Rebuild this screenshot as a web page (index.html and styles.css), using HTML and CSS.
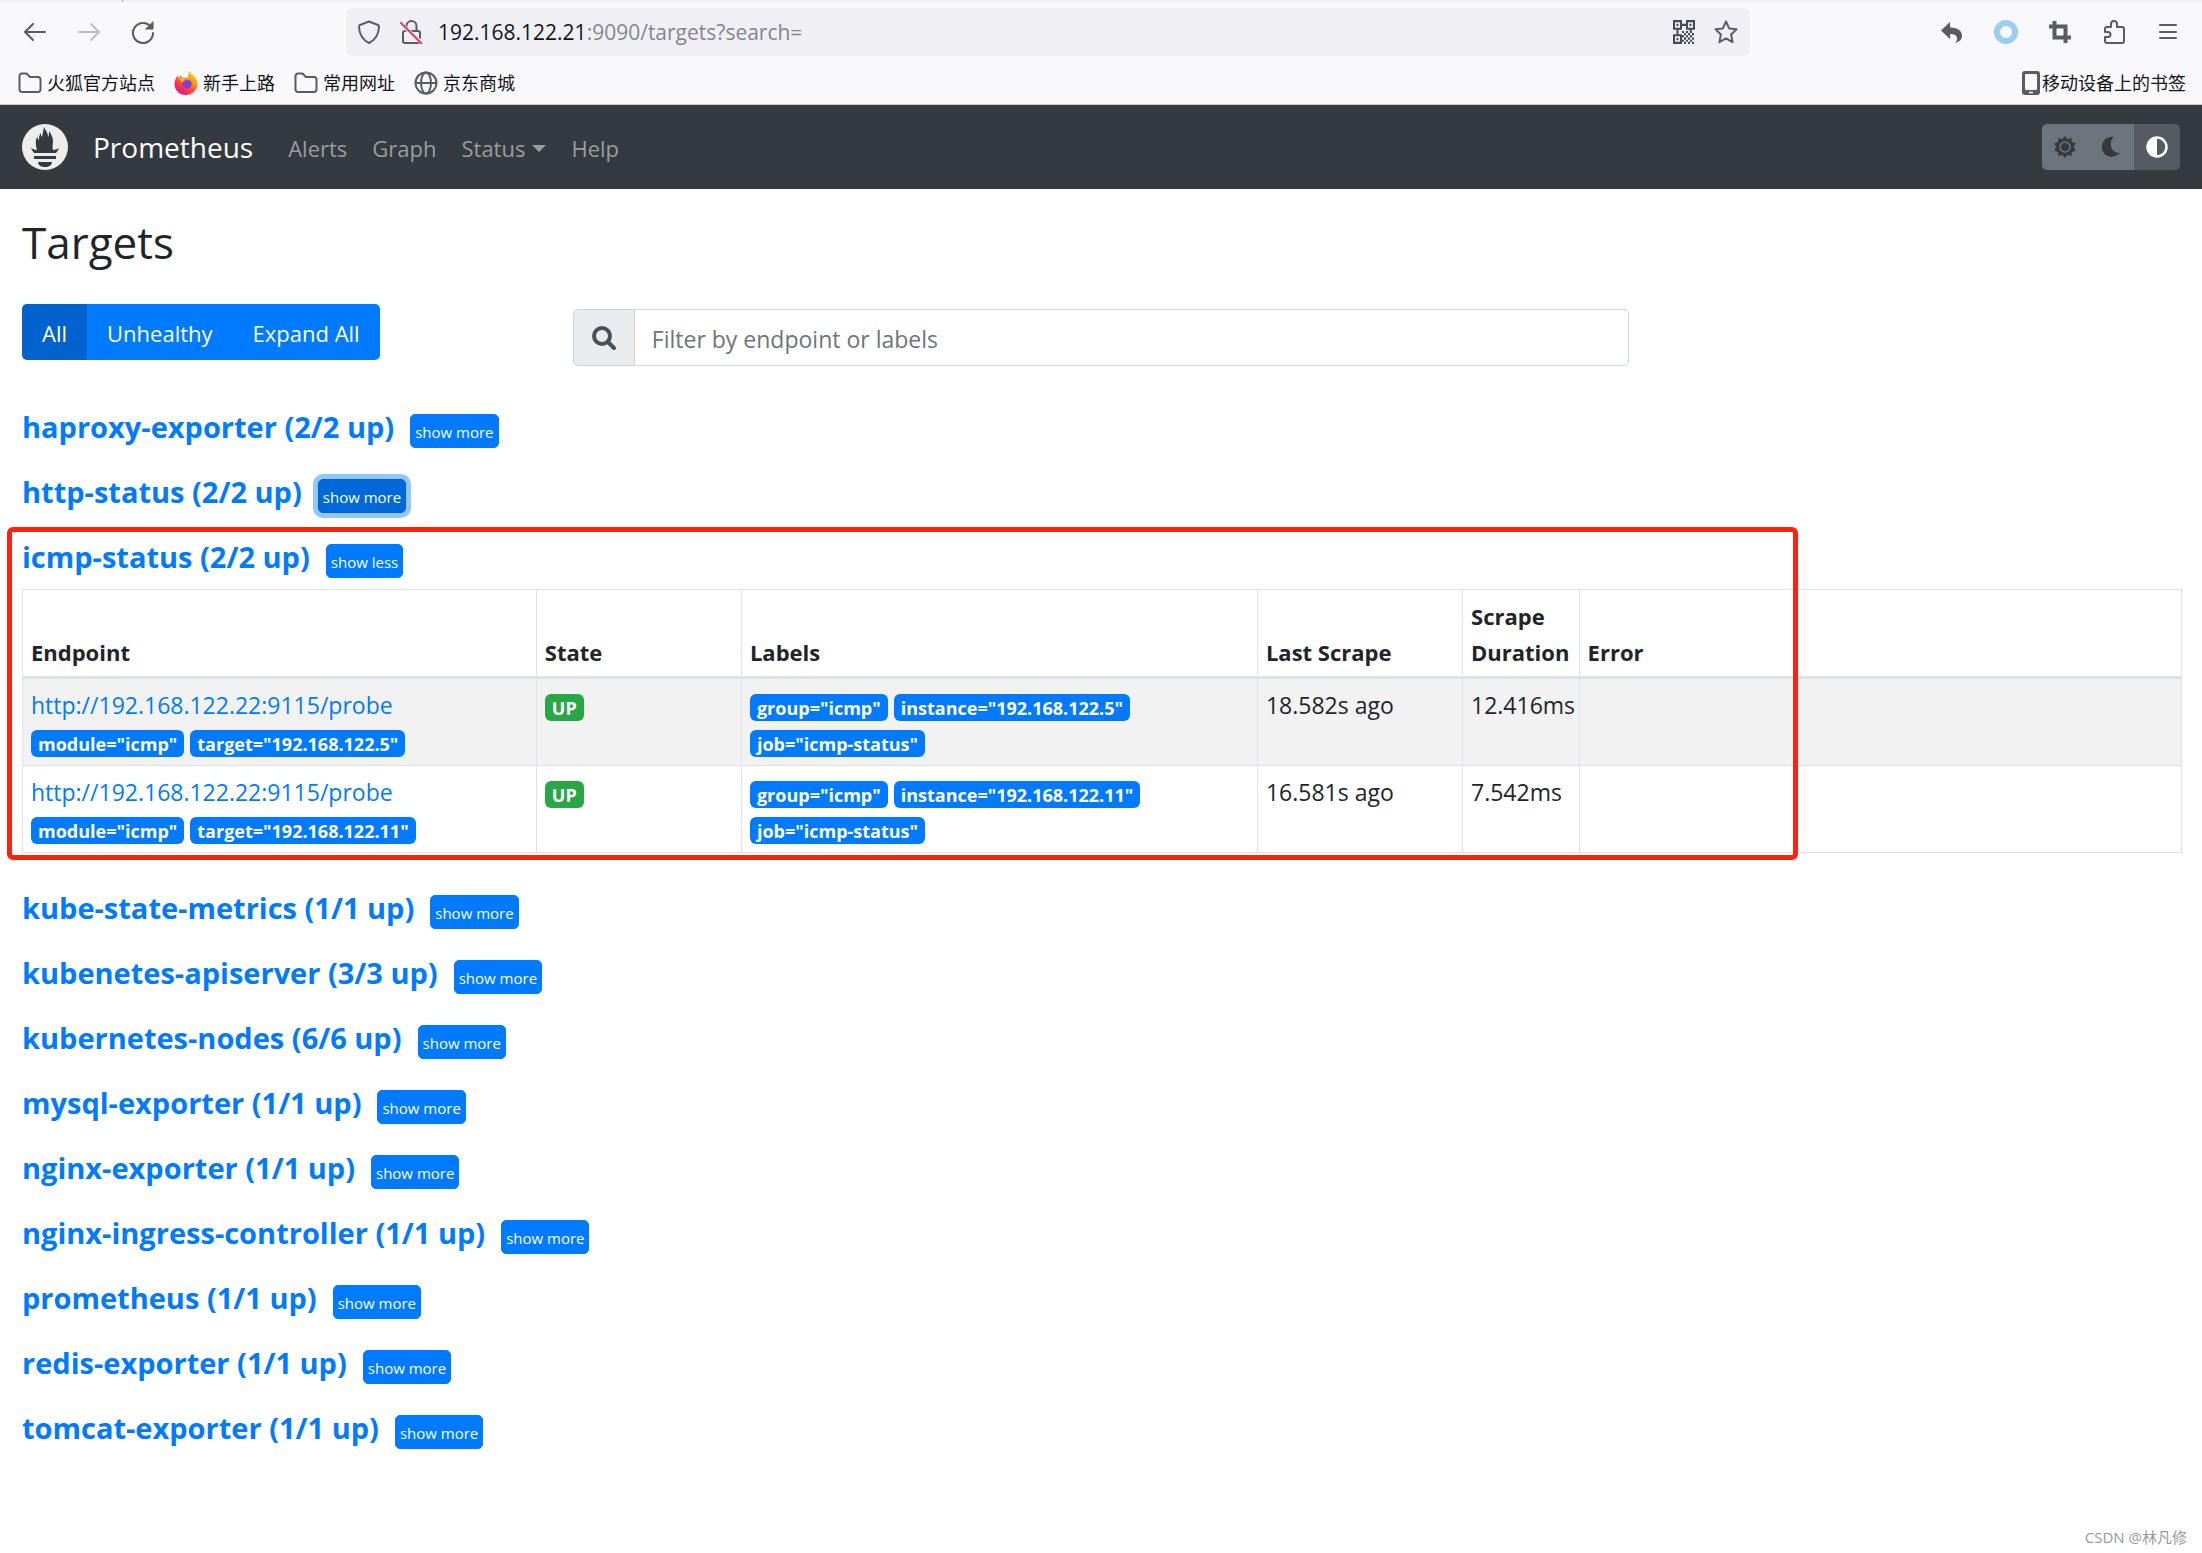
FILE: index.html
```html
<!DOCTYPE html>
<html lang="en">
<head>
<meta charset="utf-8">
<title>Prometheus Time Series Collection and Processing Server</title>
<link rel="stylesheet" href="styles.css">
</head>
<body>
<header class="browser">
  <div class="tab-edge"><span class="tab-divider"></span></div>
  <div class="toolbar">
    <div class="nav-buttons">
      <button class="icon-btn" type="button" aria-label="Back"><svg width="24" height="24" viewBox="0 0 24 24" fill="none" stroke="#5b5b66" stroke-width="2" stroke-linecap="round" stroke-linejoin="round"><path d="M22 12H2M10 4l-8 8 8 8"/></svg></button>
      <button class="icon-btn" type="button" aria-label="Forward"><svg width="24" height="24" viewBox="0 0 24 24" fill="none" stroke="#bcbcc2" stroke-width="2" stroke-linecap="round" stroke-linejoin="round"><path d="M2 12h20M14 4l8 8-8 8"/></svg></button>
      <button class="icon-btn" type="button" aria-label="Reload"><svg width="24" height="24" viewBox="0 0 24 24" fill="none" stroke="#5b5b66" stroke-width="2" stroke-linecap="round"><path d="M20 7A10 10 0 1 0 22 13"/><path d="M22 2v7h-7z" fill="#5b5b66" stroke-width="1" stroke-linejoin="round"/></svg></button>
    </div>
    <div class="urlbar">
      <svg width="24" height="24" viewBox="0 0 24 24" fill="none" stroke="#5b5b66" stroke-width="2" stroke-linejoin="round"><path d="M12 1.500l9 3.500c1 .400 1 1 1 2-.300 7-3 12.500-10 16C5 19.500 2.300 14 2 7c0-1 0-1.600 1-2z"/></svg>
      <svg class="lock" width="24" height="24" viewBox="0 0 24 24" fill="none" stroke="#5b5b66" stroke-width="2" stroke-linecap="round"><rect x="4" y="11" width="17" height="12" rx="2"/><path d="M7.500 7V6a5 5 0 0 1 10 0v5"/><path d="M1 3l22 20" stroke="#f0f0f4" stroke-width="4"/><path d="M2 3l20 20" stroke="#f0345e"/></svg>
      <div class="url" role="textbox" aria-label="Address"><span class="host">192.168.122.21</span>:9090/targets?search=</div>
      <button class="icon-btn" type="button" aria-label="QR code"><svg width="22" height="24" viewBox="0 0 22 22" preserveAspectRatio="none" fill="none" stroke="#4a4a52" stroke-width="2"><path d="M1 1h7v7H1zM14 1h7v7h-7zM1 14h7v7H1z"/><path d="M3.500 4.500h2M16.500 4.500h2M3.500 17.500h2M8 4.500h6M4.500 8v6M17.500 8v2"/><path d="M9 11h12M11 13h11M9 15h12M11 17h11M9 19h12M11 21h11" stroke-dasharray="2 2"/></svg></button>
      <button class="icon-btn" type="button" aria-label="Bookmark"><svg width="24" height="24" viewBox="0 0 24 24" fill="none" stroke="#5b5b66" stroke-width="2" stroke-linejoin="round"><path d="M12 1.500l3.200 6.900 7.300.900-5.400 5.100 1.500 7.800L12 18.400l-6.600 3.800 1.500-7.800L1.500 9.300l7.300-.900z"/></svg></button>
    </div>
    <div class="tool-buttons">
      <button class="icon-btn" type="button" aria-label="Undo"><svg width="24" height="24" viewBox="0 0 24 24" fill="#5b5b66"><path d="M10 2v5.500c8 0 12 3.500 12 8.500 0 3.500-3 6-7 7 3-2.500 4-9-5-9V19L1 10.500z"/></svg></button>
      <button class="icon-btn" type="button" aria-label="Extension"><svg width="24" height="24" viewBox="0 0 24 24" fill="none" stroke="#99cdf2" stroke-width="6"><circle cx="12" cy="12" r="9"/></svg></button>
      <button class="icon-btn" type="button" aria-label="Screenshot"><svg width="24" height="24" viewBox="0 0 24 24" fill="none" stroke="#5b5b66" stroke-width="4"><path d="M6.500 1v16.500H23M1 6.500h16.500V23"/></svg></button>
      <button class="icon-btn" type="button" aria-label="Extensions"><svg width="24" height="24" viewBox="0 0 24 24" fill="none" stroke="#5b5b66" stroke-width="2" stroke-linejoin="round"><path d="M9 7V4a3 3 0 0 1 6 0v3h5a2 2 0 0 1 2 2v12a2 2 0 0 1-2 2H5a2 2 0 0 1-2-2v-4h3a2.500 2.500 0 0 0 0-5H3V9a2 2 0 0 1 2-2z"/></svg></button>
      <button class="icon-btn" type="button" aria-label="Menu"><svg width="24" height="24" viewBox="0 0 24 24" stroke="#5b5b66" stroke-width="2" stroke-linecap="round"><path d="M4 5h16M4 12h16M4 18h16"/></svg></button>
    </div>
  </div>
  <nav class="bookmarks" aria-label="Bookmarks">
    <a class="bookmark" href="#"><svg width="24" height="24" viewBox="0 0 24 24" fill="none" stroke="#5b5b66" stroke-width="2" stroke-linejoin="round"><path d="M1.500 5A2.500 2.500 0 0 1 4 2.500h4.500L12 6h8a2.500 2.500 0 0 1 2.500 2.500v10A2.500 2.500 0 0 1 20 21H4a2.500 2.500 0 0 1-2.500-2.500z"/></svg>火狐官方站点</a>
    <a class="bookmark" href="#"><svg width="24" height="24" viewBox="0 0 24 24"><defs><linearGradient id="fox" x1="1" y1="0" x2="0.300" y2="1"><stop offset="0" stop-color="#fff44f"/><stop offset=".4" stop-color="#ff980e"/><stop offset=".75" stop-color="#ff3647"/><stop offset="1" stop-color="#e31587"/></linearGradient></defs><path d="M15.500 0c1 3 5 4.500 7 8.500C26 16 20 24 12 24 5 24 .5 19 .5 13 .5 9.500 2 6.500 3.500 4.500L5 7l1.500-2.500L9 7c2-.500 4-.500 5 0 0-2.500 0-5 1.500-7z" fill="url(#fox)"/><path d="M8 12c2-1 3-3 5-3 3 0 5 2 4.500 4.500S15 18 12.500 17.500 8 15 8 12z" fill="#7a42e0"/><path d="M5 7c2 0 4 0 6 1.500C9.500 9 9 11 7.500 11.500z" fill="#ffbd30"/></svg>新手上路</a>
    <a class="bookmark" href="#"><svg width="24" height="24" viewBox="0 0 24 24" fill="none" stroke="#5b5b66" stroke-width="2" stroke-linejoin="round"><path d="M1.500 5A2.500 2.500 0 0 1 4 2.500h4.500L12 6h8a2.500 2.500 0 0 1 2.500 2.500v10A2.500 2.500 0 0 1 20 21H4a2.500 2.500 0 0 1-2.500-2.500z"/></svg>常用网址</a>
    <a class="bookmark" href="#"><svg width="24" height="24" viewBox="0 0 24 24" fill="none" stroke="#5b5b66" stroke-width="2"><circle cx="12" cy="12" r="10.500"/><ellipse cx="12" cy="12" rx="5" ry="10.500"/><path d="M1.500 12h21"/></svg>京东商城</a>
    <a class="bookmark mobile" href="#"><svg width="18" height="24" viewBox="0 0 18 24"><rect width="18" height="24" rx="3" fill="#5b5b66"/><rect x="3" y="3" width="12" height="16" rx="1" fill="#f9f9fb"/><path d="M7 21.500h4" stroke="#f9f9fb" stroke-width="1.500"/></svg>移动设备上的书签</a>
  </nav>
</header>

<nav class="navbar">
  <a class="brand" href="#"><svg width="46" height="46" viewBox="0 0 46 46"><circle cx="23" cy="23" r="23" fill="#ededed"/><path d="M22 3c1 3 4 5 4 10 1-1 1-4 1-6 2 3 4 6 4 10 0 3-1 5 0 9 2 0 4-1 6-2-1 2-2 4-3 5H12c-1-1-2-3-3-5 2 1 4 2 6 2-1-4-2-9 0-13 1 2 2 3 2 4 0-4 0-6 2-8 0 2 0 3 1 4 1-4 1-6 2-10z" fill="#343a40"/><path d="M12 32h22v3H12zM16 38h14c0 3-3 5-7 5s-7-2-7-5z" fill="#343a40"/></svg><span>Prometheus</span></a>
  <div class="nav-links">
    <a href="#">Alerts</a>
    <a href="#">Graph</a>
    <a class="dropdown" href="#">Status</a>
    <a href="#">Help</a>
  </div>
  <div class="theme-group">
    <button type="button" aria-label="Light theme"><svg width="22" height="22" viewBox="0 0 22 22"><path d="M11 0l2.600 3.200L17.500 1.800l.3 4.200 3.900 1.300L19.800 11l1.900 3.700-3.900 1.300-.3 4.200-3.900-1.400L11 22l-2.600-3.200-3.900 1.400-.3-4.200L.3 14.700 2.200 11 .3 7.300 4.200 6l.3-4.200 3.900 1.400z" fill="#343a40"/><circle cx="11" cy="11" r="5" fill="#343a40" stroke="#6c757d" stroke-width="1.500"/></svg></button>
    <button type="button" aria-label="Dark theme"><svg width="22" height="22" viewBox="0 0 22 22"><path d="M14 1C9 4 9 17 20 17 11 25 1 19 2 10 2.500 4 8 0 14 1z" fill="#343a40"/></svg></button>
    <button class="active" type="button" aria-label="Browser theme"><svg width="22" height="22" viewBox="0 0 22 22"><circle cx="11" cy="11" r="9.500" fill="none" stroke="#fff" stroke-width="2.500"/><path d="M11 1a10 10 0 0 0 0 20z" fill="#fff"/></svg></button>
  </div>
</nav>

<main class="page">
  <h1>Targets</h1>
  <div class="controls">
    <div class="filter-group">
      <button class="active" type="button">All</button>
      <button type="button">Unhealthy</button>
      <button type="button">Expand All</button>
    </div>
    <div class="search">
      <label for="filter" aria-label="Filter"><svg width="24" height="24" viewBox="0 0 24 24" fill="none" stroke="#495057" stroke-width="4" stroke-linecap="round"><circle cx="10" cy="10" r="8"/><path d="M16 16l6 6"/></svg></label>
      <input id="filter" type="text" placeholder="Filter by endpoint or labels">
    </div>
  </div>

  <section class="pool"><h2><a href="#">haproxy-exporter (2/2 up)</a></h2><button type="button">show more</button></section>
  <section class="pool"><h2><a href="#">http-status (2/2 up)</a></h2><button class="focused" type="button">show more</button></section>
  <section class="pool-open">
    <div class="pool"><h2><a href="#">icmp-status (2/2 up)</a></h2><button type="button">show less</button></div>
    <table>
      <colgroup><col class="c-endpoint"><col class="c-state"><col class="c-labels"><col class="c-last"><col class="c-duration"><col></colgroup>
      <thead><tr><th>Endpoint</th><th>State</th><th>Labels</th><th>Last Scrape</th><th>Scrape Duration</th><th>Error</th></tr></thead>
      <tbody>
        <tr>
          <td><a href="#">http://192.168.122.22:9115/probe</a><div class="badges"><span class="badge">module="icmp"</span><span class="badge">target="192.168.122.5"</span></div></td>
          <td><div class="badges"><span class="badge up">UP</span></div></td>
          <td><div class="badges"><span class="badge">group="icmp"</span><span class="badge">instance="192.168.122.5"</span></div><div class="badges"><span class="badge">job="icmp-status"</span></div></td>
          <td>18.582s ago</td><td>12.416ms</td><td></td>
        </tr>
        <tr>
          <td><a href="#">http://192.168.122.22:9115/probe</a><div class="badges"><span class="badge">module="icmp"</span><span class="badge">target="192.168.122.11"</span></div></td>
          <td><div class="badges"><span class="badge up">UP</span></div></td>
          <td><div class="badges"><span class="badge">group="icmp"</span><span class="badge">instance="192.168.122.11"</span></div><div class="badges"><span class="badge">job="icmp-status"</span></div></td>
          <td>16.581s ago</td><td>7.542ms</td><td></td>
        </tr>
      </tbody>
    </table>
    <div class="highlight"></div>
  </section>
  <section class="pool"><h2><a href="#">kube-state-metrics (1/1 up)</a></h2><button type="button">show more</button></section>
  <section class="pool"><h2><a href="#">kubenetes-apiserver (3/3 up)</a></h2><button type="button">show more</button></section>
  <section class="pool"><h2><a href="#">kubernetes-nodes (6/6 up)</a></h2><button type="button">show more</button></section>
  <section class="pool"><h2><a href="#">mysql-exporter (1/1 up)</a></h2><button type="button">show more</button></section>
  <section class="pool"><h2><a href="#">nginx-exporter (1/1 up)</a></h2><button type="button">show more</button></section>
  <section class="pool"><h2><a href="#">nginx-ingress-controller (1/1 up)</a></h2><button type="button">show more</button></section>
  <section class="pool"><h2><a href="#">prometheus (1/1 up)</a></h2><button type="button">show more</button></section>
  <section class="pool"><h2><a href="#">redis-exporter (1/1 up)</a></h2><button type="button">show more</button></section>
  <section class="pool"><h2><a href="#">tomcat-exporter (1/1 up)</a></h2><button type="button">show more</button></section>
</main>
<div class="watermark">CSDN @林凡修</div>
</body>
</html>
```
FILE: styles.css
```css
* { box-sizing: border-box; }

body {
  margin: 0;
  min-height: 100vh;
  position: relative;
  background: #fff;
  color: #212529;
  font-family: "Open Sans", "Noto Sans CJK SC", sans-serif;
  font-size: 22px;
  line-height: 36px;
}

a { color: #007bff; text-decoration: none; }
button { font-family: inherit; cursor: pointer; }
svg { display: block; flex: none; }

/* Browser chrome */
.browser { background: #f9f9fb; border-bottom: 1px solid #c4cbc6; }
.tab-edge { height: 2px; background: #f0f0f4; padding-left: 122px; }
.tab-divider { display: block; width: 1px; height: 2px; background: #aaaab0; }
.toolbar { display: flex; align-items: center; padding: 6px 22px 6px 23px; }
.icon-btn { padding: 0; border: 0; background: none; }
.nav-buttons { display: flex; gap: 30px; width: 323px; }
.urlbar {
  flex: 1;
  display: flex;
  align-items: center;
  height: 48px;
  padding: 0 12px 0 11px;
  border-radius: 6px;
  background: #f0f0f4;
}
.lock { margin-left: 18px; }
.url { flex: 1; padding-left: 15px; font-size: 21px; color: #85858b; }
.host { color: #15141a; }
.urlbar .icon-btn { margin-left: 19px; }
.tool-buttons { display: flex; justify-content: flex-end; gap: 30px; width: 430px; }
.bookmarks { display: flex; gap: 19px; height: 42px; padding: 0 16px 0 18px; }
.bookmark { display: flex; align-items: center; gap: 5px; font-size: 18px; color: #15141a; }
.mobile { margin-left: auto; gap: 2px; }

/* Prometheus navbar */
.navbar { display: flex; align-items: center; height: 84px; padding: 0 22px; background: #343a40; }
.brand { display: flex; align-items: center; gap: 25px; color: #fff; font-size: 28px; }
.nav-links { display: flex; gap: 25px; margin-left: 35px; padding-top: 2px; }
.nav-links a { color: #9a9da0; }
.dropdown { display: flex; align-items: center; gap: 7px; }
.dropdown::after { content: ""; border: 7px solid transparent; border-top-color: currentColor; border-bottom: 0; }
.theme-group { display: flex; margin-left: auto; border-radius: 5px; overflow: hidden; }
.theme-group button {
  display: flex;
  align-items: center;
  height: 46px;
  padding: 0 12px;
  border: 0;
  background: #6c757d;
}
.theme-group .active { background: #545b62; }

/* Page */
.page { padding: 24px 20px 60px 22px; }
h1 { margin: 0 0 33px; font-size: 44px; font-weight: 400; line-height: 58px; }
.controls { display: flex; align-items: flex-start; margin-bottom: 43px; }
.filter-group { display: flex; width: 25.5%; }
.filter-group button {
  height: 56px;
  padding: 2px 20px 0;
  border: 0;
  background: #007bff;
  color: #fff;
  font-size: 22px;
}
.filter-group .active { background: #0062cc; border-radius: 5px 0 0 5px; }
.filter-group button:last-child { border-radius: 0 5px 5px 0; }
.search { display: flex; width: 48.9%; height: 57px; margin-top: 5px; }
.search label {
  display: flex;
  align-items: center;
  padding: 0 18px;
  border: 1px solid #ced4da;
  border-radius: 5px 0 0 5px;
  background: #e9ecef;
}
.search input {
  flex: 1;
  padding: 2px 17px 0;
  border: 1px solid #ced4da;
  border-left: 0;
  border-radius: 0 5px 5px 0;
  font: inherit;
  font-size: 23px;
}
.search input::placeholder { color: #6c757d; opacity: 1; }

/* Scrape pools */
.pool { display: flex; align-items: baseline; gap: 16px; height: 36px; margin-bottom: 29px; }
.pool h2 { margin: 0; font-size: 29px; font-weight: 700; line-height: 36px; }
.pool button {
  height: 34px;
  padding: 2px 4px 0;
  border: 1px solid #007bff;
  border-radius: 5px;
  background: #007bff;
  color: #fff;
  font-size: 15px;
}
.pool .focused { background: #0069d9; border-color: #0062cc; box-shadow: 0 0 0 5px #93c6fc; }
.pool-open { position: relative; margin-bottom: 37px; }
.pool-open .pool { margin-bottom: 14px; }
.highlight {
  position: absolute;
  top: -12px;
  bottom: -7px;
  left: -15px;
  width: 82.9%;
  border: 5px solid #ff2010;
  border-radius: 6px;
  pointer-events: none;
}

table { width: 100%; table-layout: fixed; border-collapse: collapse; }
th, td { padding: 8px 7px 6px 8px; border: 1px solid #dee2e6; text-align: left; vertical-align: top; }
th { border-bottom-width: 3px; vertical-align: bottom; }
td { font-size: 23px; }
tbody tr:nth-child(odd) { background: #f2f2f2; }
.c-endpoint { width: 23.8%; }
.c-state { width: 9.5%; }
.c-labels { width: 23.9%; }
.c-last { width: 9.5%; }
.c-duration { width: 5.4%; }
.badges { display: flex; align-items: center; gap: 6px; height: 36px; padding-top: 4px; }
.badge {
  height: 27px;
  padding: 0 7px;
  border-radius: 6px;
  background: #007bff;
  color: #fff;
  font-size: 18px;
  font-weight: 700;
  line-height: 28px;
  white-space: nowrap;
}
.up { background: #28a745; }

.watermark { position: absolute; right: 15px; bottom: 3px; color: #999; font-size: 15px; line-height: 26px; }
```
